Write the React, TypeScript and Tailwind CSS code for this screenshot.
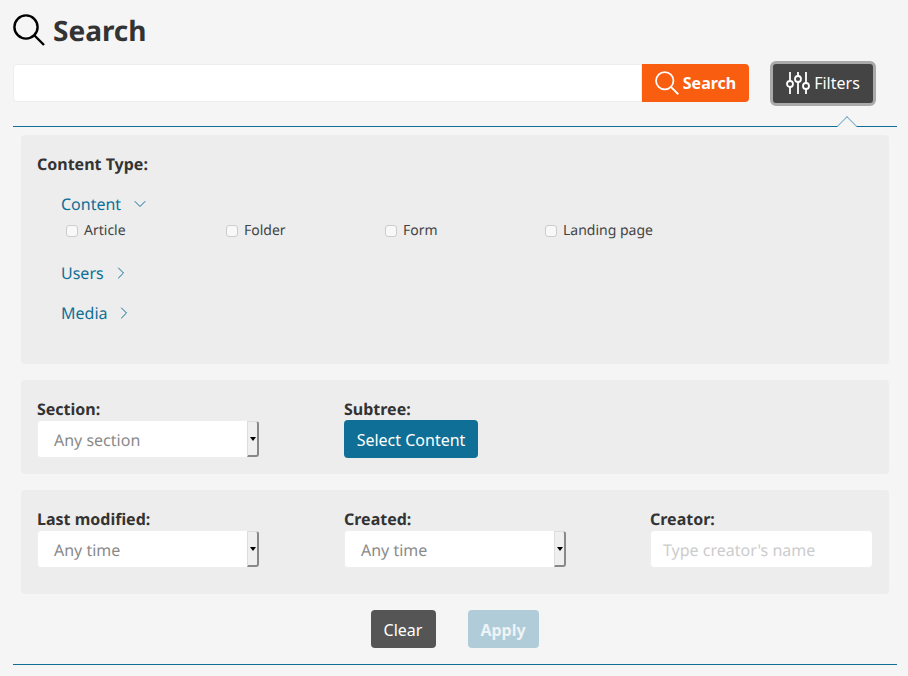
import { ChevronDown, ChevronRight } from 'lucide-react';

function SearchGlyph({ className }: { className: string }) {
  return (
    <svg className={className} viewBox="0 0 32 32" fill="none" stroke="currentColor" strokeWidth="2.4">
      <circle cx="13" cy="13" r="11.6" />
      <path d="M21.5 21.5 31 31" />
    </svg>
  );
}

function SlidersGlyph() {
  return (
    <svg className="h-6 w-6 text-white" viewBox="0 0 24 24" fill="none" stroke="currentColor" strokeWidth="1.8">
      <path d="M4 1v9M4 16v7M12 1v4M12 11v12M20 1v11M20 18v5" />
      <circle cx="4" cy="13" r="3" />
      <circle cx="12" cy="8" r="3" />
      <circle cx="20" cy="15" r="3" />
    </svg>
  );
}

function Check({ label, width }: { label: string; width: string }) {
  return (
    <label className={`flex items-center gap-[6px] text-[14px] leading-[20px] text-[#444] ${width}`}>
      <span className="ml-[5px] h-[12px] w-[12px] rounded-[3px] border border-[#ccc] bg-[#f8f8f8]" />
      {label}
    </label>
  );
}

function SelectBox({ placeholder }: { placeholder: string }) {
  return (
    <div className="flex h-[38px] w-[222px]">
      <div className="flex-1 rounded-l-[4px] border border-r-0 border-[#eee] bg-white pl-[16px] text-[16px] leading-[38px] text-[#8a8a8a]">
        {placeholder}
      </div>
      <div className="my-[1px] flex w-[12px] items-center justify-center rounded-r-[3px] border-t border-r-2 border-b-2 border-l border-t-[#ddd] border-r-[#888] border-b-[#888] border-l-[#ddd] bg-[#efefef]">
        <span className="h-0 w-0 border-x-[3px] border-t-[4px] border-x-transparent border-t-black" />
      </div>
    </div>
  );
}

function Category({ label, open }: { label: string; open?: boolean }) {
  return (
    <div className={`flex h-[24px] items-center text-[16px] text-[#0f6f96] ${open ? 'gap-[9px]' : 'gap-[7px]'}`}>
      {label}
      {open ? (
        <ChevronDown className="h-[20px] w-[20px]" strokeWidth={1.2} />
      ) : (
        <ChevronRight className="h-[20px] w-[20px]" strokeWidth={1.2} />
      )}
    </div>
  );
}

export default function App() {
  return (
    <div className="h-[676px] overflow-hidden bg-[#f5f5f5] pt-[14px] pr-[11px] pl-[13px] font-['Noto_Sans',sans-serif] text-[#333] [text-rendering:geometricPrecision]">
      <div className="flex h-[32px] items-center gap-[8px]">
        <SearchGlyph className="h-[32px] w-[32px] text-black" />
        <h1 className="mt-[2px] text-[28px] leading-[32px] font-bold">Search</h1>
      </div>

      <div className="mt-[18px] flex h-[38px] items-center">
        <div className="h-[38px] w-[629px] rounded-l-[4px] border border-[#eee] bg-white" />
        <button className="flex h-[38px] w-[107px] items-center justify-center gap-[4px] rounded-r-[4px] bg-[#f95d10] text-[16px] font-bold text-white">
          <SearchGlyph className="h-[24px] w-[24px]" />
          Search
        </button>
        <button className="ml-[21px] flex h-[45px] w-[106px] shrink-0 items-center justify-center gap-[4px] rounded-[6px] border-[3px] border-[#aaa] bg-[#444] text-[16px] text-white">
          <SlidersGlyph />
          Filters
        </button>
      </div>

      <div className="relative mt-[24px] border-t border-[#0f6f96]">
        <span className="absolute top-[-8px] right-[43px] h-[14px] w-[14px] rotate-45 border-t border-l border-[#7fb0c8] bg-[#f5f5f5]" />
      </div>

      <div className="relative mx-[8px] mt-[8px] h-[229px] rounded-[4px] bg-[#ededed] pt-[18px] pl-[16px]">
        <div className="text-[16px] leading-[22px] font-bold">Content Type:</div>
        <div className="mt-[17px] pl-[24px]">
          <Category label="Content" open />
          <div className="mt-[5px] flex">
            <Check label="Article" width="w-[160px]" />
            <Check label="Folder" width="w-[159px]" />
            <Check label="Form" width="w-[160px]" />
            <Check label="Landing page" width="w-[160px]" />
          </div>
          <div className="mt-[20px]">
            <Category label="Users" />
          </div>
          <div className="mt-[16px]">
            <Category label="Media" />
          </div>
        </div>
      </div>

      <div className="mx-[8px] mt-[16px] flex h-[94px] rounded-[4px] bg-[#ededed] pt-[18px] pl-[16px]">
        <div className="w-[307px]">
          <div className="text-[16px] leading-[22px] font-bold">Section:</div>
          <SelectBox placeholder="Any section" />
        </div>
        <div>
          <div className="text-[16px] leading-[22px] font-bold">Subtree:</div>
          <button className="h-[38px] w-[134px] rounded-[4px] bg-[#0f6f96] pt-[1px] text-[16px] text-white">Select Content</button>
        </div>
      </div>

      <div className="mx-[8px] mt-[16px] flex h-[104px] rounded-[4px] bg-[#ededed] pt-[18px] pl-[16px]">
        <div className="w-[307px]">
          <div className="text-[16px] leading-[22px] font-bold">Last modified:</div>
          <SelectBox placeholder="Any time" />
        </div>
        <div className="w-[306px]">
          <div className="text-[16px] leading-[22px] font-bold">Created:</div>
          <SelectBox placeholder="Any time" />
        </div>
        <div>
          <div className="text-[16px] leading-[22px] font-bold">Creator:</div>
          <div className="h-[38px] w-[223px] rounded-[4px] border border-[#eee] bg-white pl-[12px] text-[16px] leading-[38px] text-[#ccc]">
            Type creator's name
          </div>
        </div>
      </div>

      <div className="mt-[16px] flex justify-center gap-[32px] pr-[1px]">
        <button className="h-[38px] w-[65px] rounded-[4px] bg-[#555] pt-[1px] text-[16px] text-white">Clear</button>
        <button className="h-[38px] w-[71px] rounded-[4px] bg-[#b0ccd9] pt-[1px] text-[16px] font-bold text-[#eef3f6]">Apply</button>
      </div>

      <div className="mt-[16px] border-t border-[#0f6f96]" />
    </div>
  );
}
